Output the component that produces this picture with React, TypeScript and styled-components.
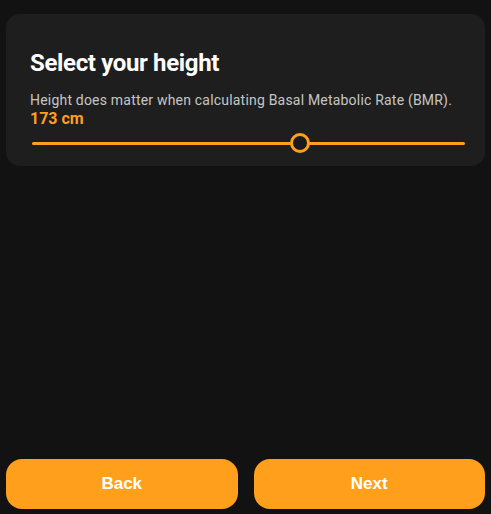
import React, { useState } from "react";
import styled, { createGlobalStyle } from "styled-components";

const ORANGE = "#ff9f1c";

const GlobalStyle = createGlobalStyle`
  html, body {
    margin: 0;
    padding: 0;
    background: #121212;
  }
  * {
    box-sizing: border-box;
  }
`;

const Page = styled.div`
  display: flex;
  flex-direction: column;
  min-height: 100vh;
  padding: 14px 6px 5px;
  background: #121212;
  font-family: Roboto, "Liberation Sans", sans-serif;
`;

const Card = styled.section`
  background: #1e1e1e;
  border-radius: 14px;
  padding: 35px 20px 12px 24px;
`;

const Title = styled.h1`
  margin: 0 0 15px;
  font-size: 24px;
  line-height: 28px;
  font-weight: 700;
  color: #ffffff;
  letter-spacing: -0.35px;
`;

const Description = styled.p`
  margin: 0;
  font-size: 14px;
  line-height: 17px;
  letter-spacing: 0.2px;
  color: #c6c6c6;
`;

const Value = styled.div`
  font-size: 16px;
  line-height: 19px;
  font-weight: 700;
  color: ${ORANGE};
`;

const SliderBox = styled.div`
  position: relative;
  height: 22px;
  margin: 4px 0 0 2px;
`;

const Track = styled.div`
  position: absolute;
  left: 0;
  right: 0;
  top: 50%;
  height: 3px;
  margin-top: -1px;
  background: ${ORANGE};
  border-radius: 2px;
`;

const Thumb = styled.div`
  position: absolute;
  top: 50%;
  width: 20px;
  height: 20px;
  margin: -10px 0 0 -10px;
  border-radius: 50%;
  border: 3px solid ${ORANGE};
  background: #1a1a1a;
`;

const Spacer = styled.div`
  flex: 1;
`;

const Actions = styled.div`
  display: grid;
  grid-template-columns: 1fr 1fr;
  gap: 16px;
`;

const ActionButton = styled.button`
  height: 50px;
  border: none;
  border-radius: 16px;
  background: ${ORANGE};
  color: #ffffff;
  font-family: "Liberation Sans", Arial, sans-serif;
  font-size: 17px;
  font-weight: 700;
  cursor: pointer;
`;

const MIN = 40;
const MAX = 255;

const App: React.FC = () => {
  const [height] = useState(173);
  const pct = ((height - MIN) / (MAX - MIN)) * 100;

  return (
    <>
      <GlobalStyle />
      <Page>
        <Card>
          <Title>Select your height</Title>
          <Description>
            Height does matter when calculating Basal Metabolic Rate (BMR).
          </Description>
          <Value>{height} cm</Value>
          <SliderBox>
            <Track />
            <Thumb style={{ left: `${pct}%` }} />
          </SliderBox>
        </Card>
        <Spacer />
        <Actions>
          <ActionButton>Back</ActionButton>
          <ActionButton>Next</ActionButton>
        </Actions>
      </Page>
    </>
  );
};

export default App;
